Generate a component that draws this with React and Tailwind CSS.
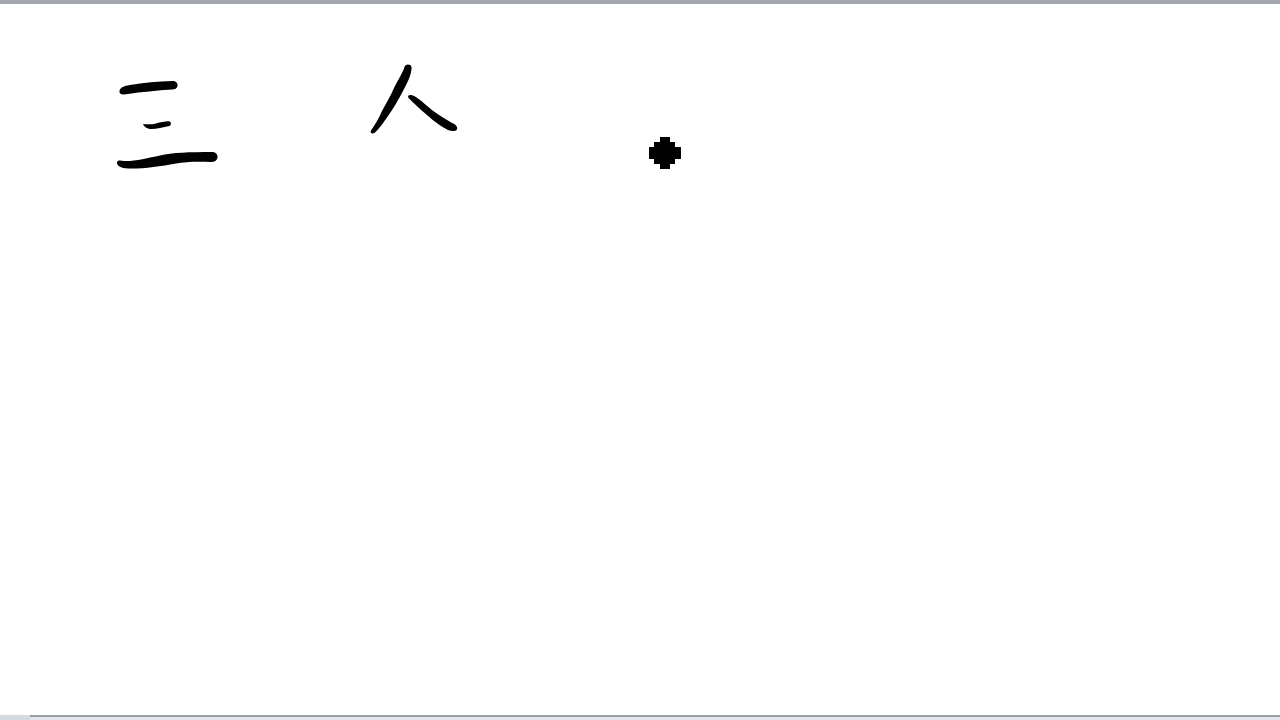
function Ink() {
  return (
    <svg className="block h-full w-full" viewBox="0 0 1280 711">
      <g transform="translate(0 -4)" fill="#000">
        {/* 三 */}
        <path d="M119.5 91C120 87.5 124 86 130 85C143 82.5 158 81.5 172 81C176 81 178 83 177.5 86C177 88.5 175 89.5 172 89.5C157 90.5 141 92 128 94C123 95 119 94.5 119.5 91Z" />
        <path d="M143 124C147 124.5 152 124.5 156 123.5C161 122 166 121 169 121.3C171.5 121.5 171.5 125.5 169.5 126C163 127 157 129 151 129C147 129 144 126.5 143 124Z" />
        <path d="M117 162C118 160 121 160.5 124 161C134 161.5 148 158 160 155.5C172 152.5 190 152 212 152C216 152 218 154.5 217.5 157.5C217 160.5 214.5 162 211 162C198 161.5 186 161.5 176 163.5C160 166.5 142 169 128 168.5C121 168.5 116 165 117 162Z" />
        {/* 人 */}
        <path d="M404.5 67C405 64 410.5 63.5 411.5 67C412 72 409 80 404 89C399 99 393 109 388 116C384 122 379 129 375 132.5C373 134.5 369.5 133.5 371 130.5C375 125 379 118 382 111C387 102 391 95 394 88C398 80 403 72 404.5 67Z" />
        <path d="M408 96C409.5 94.5 412 95 415 96.5C421 100 428 107 434 111.5C440 116 447 120 452 123C456 124.5 458 127 457 129.5C455.5 131.5 451.5 131.5 448 130C441 126.5 433 120.5 427 115C420 109 413 102.5 408.5 98Z" />
        {/* dot */}
        <path d="M660 137H670V142H675V147H681V159H675V164H670V169H660V164H654V159H649V147H654V142H660Z" />
      </g>
    </svg>
  );
}

export default function App() {
  return (
    <div className="flex h-[720px] w-[1280px] flex-col overflow-hidden bg-white">
      <div className="h-1 shrink-0 bg-[#a3a7ab]" />
      <div className="min-h-0 flex-1">
        <Ink />
      </div>
      <div className="flex h-[5px] shrink-0 bg-[#e3e6ec]">
        <div className="w-[30px] shrink-0 bg-[#d5d9e0]" />
        <div className="flex-1 border-t-2 border-[#9a9ea5]" />
      </div>
    </div>
  );
}
